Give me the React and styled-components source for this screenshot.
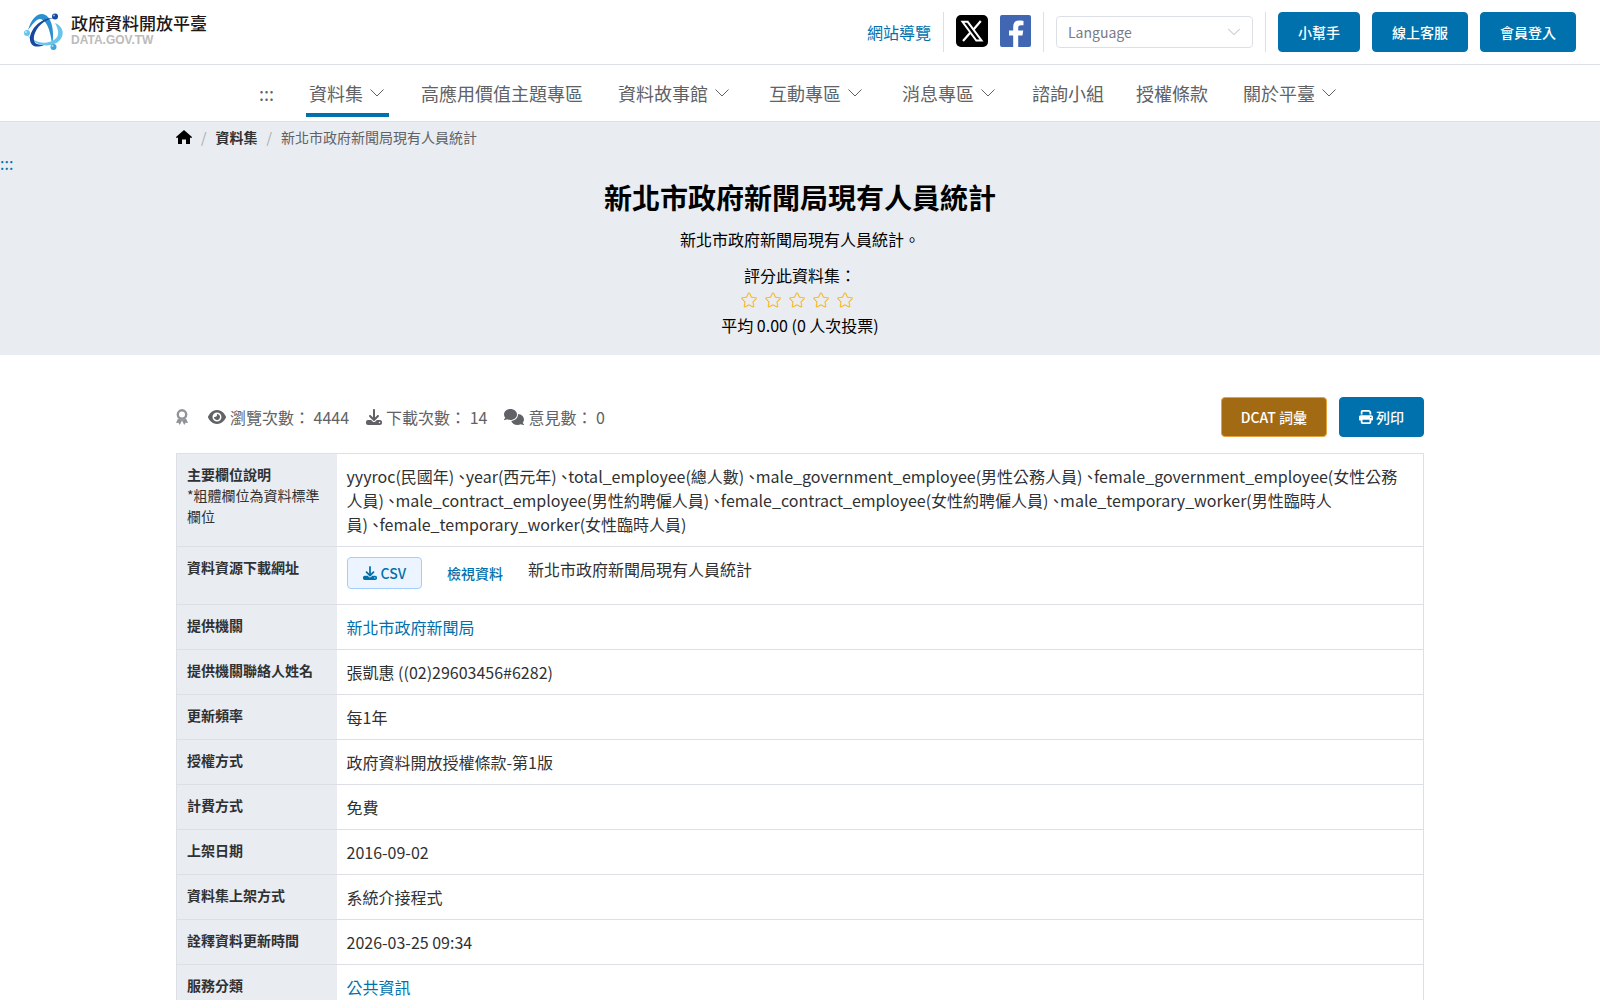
import React from "react";
import styled, { createGlobalStyle, css } from "styled-components";
import { FaDownload, FaEye, FaComments, FaPrint } from "react-icons/fa6";

const COLORS = {
  primary: "#0071ad",
  primaryLight: "#ecf5ff",
  primaryBorder: "#a0cfff",
  warning: "#a36a14",
  warningBorder: "#e6a23c",
  panel: "#e9ecf1",
  border: "#dcdfe6",
  text: "#303133",
  textMuted: "#606266",
  textLight: "#a8abb2",
  star: "#f7ba2a",
};

const NAV_ITEMS = [
  { label: "資料集", menu: true, active: true },
  { label: "高應用價值主題專區" },
  { label: "資料故事館", menu: true },
  { label: "互動專區", menu: true },
  { label: "消息專區", menu: true },
  { label: "諮詢小組" },
  { label: "授權條款" },
  { label: "關於平臺", menu: true },
];

const FIELDS = [
  "yyyroc(民國年)",
  "year(西元年)",
  "total_employee(總人數)",
  "male_government_employee(男性公務人員)",
  "female_government_employee(女性公務人員)",
  "male_contract_employee(男性約聘僱人員)",
  "female_contract_employee(女性約聘僱人員)",
  "male_temporary_worker(男性臨時人員)",
  "female_temporary_worker(女性臨時人員)",
];

// no line break on either side of the mark
const FIELD_SEPARATOR = "\u00a0、\u2060";

const DETAILS = [
  { name: "提供機關", value: "新北市政府新聞局", link: true },
  { name: "提供機關聯絡人姓名", value: "張凱惠 ((02)29603456#6282)" },
  { name: "更新頻率", value: "每1年" },
  { name: "授權方式", value: "政府資料開放授權條款-第1版" },
  { name: "計費方式", value: "免費" },
  { name: "上架日期", value: "2016-09-02" },
  { name: "資料集上架方式", value: "系統介接程式" },
  { name: "詮釋資料更新時間", value: "2026-03-25 09:34" },
  { name: "服務分類", value: "公共資訊", link: true },
];

function Chevron({ size = 16 }) {
  return (
    <svg width={size} height={size} viewBox="0 0 16 16" fill="none" aria-hidden="true">
      <path d="M1.5 4.5 8 11l6.5-6.5" stroke="currentColor" />
    </svg>
  );
}

function Emblem() {
  return (
    <svg width="40" height="38" viewBox="0 0 40 38" aria-hidden="true">
      <path d="M4 17C7 7 12 1 18 1c7 0 11 10 11 20 0 4 0 7-1 10-1-9-4-24-12-25C12 6 8 12 4 17z" fill="#2c8fd0" />
      <path d="M2 20c7 9 17 12 26 8 7-3 8-9 3-18 8 3 10 11 5 17-8 9-26 7-34-7z" fill="#67c5ec" />
      <path d="M30 5c-9 1-18 9-20 18-1 7 2 9 10 9-7 3-13 2-14-5C5 17 17 4 30 5z" fill="#17479e" />
      <circle cx="31" cy="3.500" r="3" fill="#17479e" />
      <circle cx="3" cy="20" r="3" fill="#67c5ec" />
      <circle cx="29.500" cy="34" r="3" fill="#3fa4dc" />
      <circle cx="30" cy="2.500" r="1" fill="#8fb4e4" />
      <circle cx="2" cy="19" r="1" fill="#c5eaf9" />
      <circle cx="28.500" cy="33" r="1" fill="#b5def4" />
    </svg>
  );
}

function XLogo() {
  return (
    <svg width="32" height="32" viewBox="0 0 32 32" aria-hidden="true">
      <rect width="32" height="32" rx="5" fill="#000" />
      <path d="M6.500 6.800h5.200L25.500 25.500h-5.200z" stroke="#fff" strokeWidth="2" fill="none" />
      <path d="M24.800 6 17.300 14.700M14.200 17.700 7 26" stroke="#fff" strokeWidth="2.200" />
    </svg>
  );
}

function FacebookLogo() {
  return (
    <svg width="31" height="32" viewBox="0 0 31 32" aria-hidden="true">
      <rect width="31" height="32" rx="2" fill="#4267b2" />
      <path
        d="M13.200 32V20.500H9v-5h4.200v-3.800C13.200 7.500 15.500 5.500 19 5.500c1.800 0 3.500.2 4.500.4v4.400h-2.600c-2.200 0-2.700 1-2.700 2.700v2.500h5l-.7 5h-4.300V32z"
        fill="#fff"
      />
    </svg>
  );
}

function HomeIcon() {
  return (
    <svg width="16" height="16" viewBox="0 0 16 16" aria-hidden="true">
      <path d="M8 1 0 8v.7h2V15h4v-4.500h4V15h4V8.700h2V8z" fill="#000" />
    </svg>
  );
}

function RibbonIcon() {
  return (
    <svg width="12" height="16" viewBox="0 0 12 16" fill="none" aria-hidden="true">
      <circle cx="6" cy="5.500" r="4.200" stroke="currentColor" strokeWidth="2.400" />
      <path d="M2 9.500 0 14l2.400-.3L3.800 16 6 11.500 8.200 16l1.400-2.300L12 14l-2-4.500L6 11z" fill="currentColor" />
    </svg>
  );
}

function StarIcon() {
  return (
    <svg width="18" height="18" viewBox="0 0 1024 1024" aria-hidden="true">
      <path
        d="m512 747.840 228.160 119.936a6.400 6.400 0 0 0 9.280-6.720l-43.520-254.080 184.512-179.904a6.400 6.400 0 0 0-3.520-10.880l-255.104-37.120L517.760 147.904a6.400 6.400 0 0 0-11.520 0L392.192 379.072l-255.104 37.120a6.400 6.400 0 0 0-3.520 10.880L318.080 606.976l-43.584 254.080a6.400 6.400 0 0 0 9.280 6.720zM313.600 924.480a70.400 70.400 0 0 1-102.144-74.240l37.888-220.928L88.960 472.960A70.400 70.400 0 0 1 128 352.896l221.760-32.256 99.200-200.960a70.400 70.400 0 0 1 126.208 0l99.200 200.960 221.824 32.256a70.400 70.400 0 0 1 39.040 120.064L774.720 629.376l37.888 220.928a70.400 70.400 0 0 1-102.144 74.240L512 820.096z"
        fill="currentColor"
      />
    </svg>
  );
}

function DetailRow({ name, note, children }) {
  return (
    <tr>
      <FieldName scope="row">
        {name}
        {note && <Note>{note}</Note>}
      </FieldName>
      <FieldValue>{children}</FieldValue>
    </tr>
  );
}

function App() {
  return (
    <>
      <GlobalStyle />
      <TopBar>
        <Brand href="#">
          <Emblem />
          <BrandText>
            <BrandName>政府資料開放平臺</BrandName>
            <BrandDomain>DATA.GOV.TW</BrandDomain>
          </BrandText>
        </Brand>
        <Tools>
          <TextLink href="#">網站導覽</TextLink>
          <Divider />
          <SocialLink href="#" aria-label="X">
            <XLogo />
          </SocialLink>
          <SocialLink href="#" aria-label="Facebook">
            <FacebookLogo />
          </SocialLink>
          <Divider />
          <SelectWrapper>
            <LanguageSelect aria-label="Language" defaultValue="">
              <option value="">Language</option>
            </LanguageSelect>
            <SelectArrow>
              <Chevron size={14} />
            </SelectArrow>
          </SelectWrapper>
          <Divider />
          <Button>小幫手</Button>
          <Button>線上客服</Button>
          <Button>會員登入</Button>
        </Tools>
      </TopBar>

      <Nav>
        <NavLink href="#">:::</NavLink>
        {NAV_ITEMS.map(({ label, menu, active }) => (
          <NavLink key={label} href="#" $menu={menu} $active={active}>
            {label}
            {menu && <Chevron />}
          </NavLink>
        ))}
      </Nav>

      <main>
        <Hero>
          <Container>
            <Breadcrumb>
              <a href="#" aria-label="首頁">
                <HomeIcon />
              </a>
              <Slash>/</Slash>
              <CrumbLink href="#">資料集</CrumbLink>
              <Slash>/</Slash>
              <span>新北市政府新聞局現有人員統計</span>
            </Breadcrumb>
          </Container>
          <Anchor href="#">:::</Anchor>
          <Title>新北市政府新聞局現有人員統計</Title>
          <Description>新北市政府新聞局現有人員統計。</Description>
          <div>評分此資料集：</div>
          <Stars>
            {[1, 2, 3, 4, 5].map((score) => (
              <StarButton key={score} aria-label={`${score}`}>
                <StarIcon />
              </StarButton>
            ))}
          </Stars>
          <div>平均 0.00 (0 人次投票)</div>
        </Hero>

        <Container>
          <Summary>
            <Stats>
              <RibbonWrapper>
                <RibbonIcon />
              </RibbonWrapper>
              <Stat>
                <FaEye size={18} />
                瀏覽次數： 4444
              </Stat>
              <Stat>
                <FaDownload size={16} />
                下載次數： 14
              </Stat>
              <Stat>
                <FaComments size={20} />
                意見數： 0
              </Stat>
            </Stats>
            <Actions>
              <Button $variant="warning">DCAT 詞彙</Button>
              <Button>
                <FaPrint size={14} />
                列印
              </Button>
            </Actions>
          </Summary>

          <Details>
            <tbody>
              <DetailRow name="主要欄位說明" note="*粗體欄位為資料標準欄位">
                <FieldList>{FIELDS.join(FIELD_SEPARATOR)}</FieldList>
              </DetailRow>
              <DetailRow name="資料資源下載網址">
                <Resource>
                  <CsvButton>
                    <FaDownload size={14} />
                    CSV
                  </CsvButton>
                  <SmallButton>檢視資料</SmallButton>
                  <span>新北市政府新聞局現有人員統計</span>
                </Resource>
              </DetailRow>
              {DETAILS.map(({ name, value, link }) => (
                <DetailRow key={name} name={name}>
                  {link ? <TextLink href="#">{value}</TextLink> : value}
                </DetailRow>
              ))}
            </tbody>
          </Details>
        </Container>
      </main>
    </>
  );
}

const GlobalStyle = createGlobalStyle`
  *, *::before, *::after {
    box-sizing: border-box;
  }

  html {
    overflow-x: hidden;
    scrollbar-width: none;
  }

  body {
    margin: 0;
    background: #fff;
    color: #000;
    font-family: "Noto Sans CJK TC", sans-serif;
    font-size: 16px;
    line-height: 24px;
  }

  a {
    color: inherit;
    text-decoration: none;
  }

  button, select {
    font: inherit;
    cursor: pointer;
  }

  svg {
    display: block;
    flex-shrink: 0;
  }
`;

const Container = styled.div`
  width: 78%;
  margin: 0 auto;
`;

const TopBar = styled.header`
  display: flex;
  justify-content: space-between;
  align-items: center;
  padding: 12px 24px;
  border-bottom: 1px solid ${COLORS.border};
`;

const Brand = styled.a`
  display: flex;
  align-items: center;
  gap: 7px;
`;

const BrandText = styled.span`
  display: flex;
  flex-direction: column;
  padding-bottom: 4px;
`;

const BrandName = styled.span`
  color: #231815;
  font-size: 17px;
  font-weight: 500;
  line-height: 20px;
`;

const BrandDomain = styled.span`
  color: #bbb;
  font-family: "Liberation Sans", sans-serif;
  font-size: 12px;
  font-weight: 700;
  line-height: 14px;
`;

const Tools = styled.div`
  display: flex;
  align-items: center;
  gap: 12px;
`;

const TextLink = styled.a`
  color: ${COLORS.primary};
`;

const SocialLink = styled.a`
  padding-bottom: 2px;
`;

const Divider = styled.span`
  width: 1px;
  height: 40px;
  background: ${COLORS.border};
`;

const SelectWrapper = styled.div`
  position: relative;
  width: 197px;
`;

const LanguageSelect = styled.select`
  appearance: none;
  display: block;
  width: 100%;
  height: 32px;
  padding: 0 11px;
  border: 1px solid ${COLORS.border};
  border-radius: 4px;
  background: #fff;
  color: #7a7a88;
  font-size: 14px;
`;

const SelectArrow = styled.span`
  position: absolute;
  top: 9px;
  right: 12px;
  color: ${COLORS.textLight};
  pointer-events: none;
`;

const Button = styled.button`
  display: flex;
  align-items: center;
  gap: 3px;
  height: 40px;
  padding: 0 19px;
  border: 1px solid ${COLORS.primary};
  border-radius: 4px;
  background: ${COLORS.primary};
  color: #fff;
  font-size: 14px;
  font-weight: 500;

  ${({ $variant }) =>
    $variant === "warning" &&
    css`
      border-color: ${COLORS.warningBorder};
      background: ${COLORS.warning};
    `}
`;

const Nav = styled.nav`
  display: flex;
  justify-content: center;
  gap: 32px;
  padding: 4px 0;
  border-bottom: 1px solid ${COLORS.border};
`;

const NavLink = styled.a`
  display: flex;
  align-items: center;
  gap: 6px;
  height: 48px;
  padding: ${({ $menu }) => ($menu ? "4px 4px 0 3px" : "4px 0 0")};
  border-bottom: 4px solid ${({ $active }) => ($active ? COLORS.primary : "transparent")};
  color: ${COLORS.textMuted};
  font-size: 18px;
`;

const Hero = styled.section`
  padding-bottom: 18px;
  background: ${COLORS.panel};
  text-align: center;
`;

const Breadcrumb = styled.nav`
  display: flex;
  align-items: center;
  padding: 5px 0 4px;
  color: ${COLORS.textMuted};
  font-size: 14px;
  line-height: 20px;
`;

const Slash = styled.span`
  margin: 0 9px;
  color: ${COLORS.textLight};
`;

const CrumbLink = styled.a`
  color: ${COLORS.text};
  font-weight: 700;
`;

const Anchor = styled.a`
  display: block;
  color: ${COLORS.primary};
  text-align: left;
`;

const Title = styled.h1`
  margin: 0;
  font-size: 28px;
  font-weight: 700;
  line-height: 44px;
`;

const Description = styled.p`
  margin: 8px 0 12px;
`;

const Stars = styled.div`
  display: flex;
  justify-content: center;
  align-items: center;
  height: 26px;
  color: ${COLORS.star};
`;

const StarButton = styled.button`
  padding: 0 6px 0 0;
  border: none;
  background: none;
  color: inherit;
`;

const Summary = styled.div`
  display: flex;
  justify-content: space-between;
  align-items: center;
  margin: 42px 0 16px;
`;

const Stats = styled.div`
  display: flex;
  gap: 17px;
  color: ${COLORS.textMuted};
`;

const Stat = styled.span`
  display: flex;
  align-items: center;
  gap: 4px;
`;

const RibbonWrapper = styled(Stat)`
  margin-right: 3px;
  color: #909399;
`;

const Actions = styled.div`
  display: flex;
  gap: 12px;
`;

const Details = styled.table`
  width: 100%;
  border: 1px solid ${COLORS.border};
  border-collapse: collapse;
  color: ${COLORS.text};
`;

const FieldName = styled.th`
  width: 160px;
  padding: 10px;
  border-bottom: 1px solid ${COLORS.border};
  background: ${COLORS.panel};
  font-size: 14px;
  font-weight: 700;
  line-height: 21px;
  text-align: left;
  vertical-align: top;
`;

const Note = styled.div`
  font-weight: 400;
`;

const FieldValue = styled.td`
  padding: 10px;
  border-bottom: 1px solid ${COLORS.border};
  vertical-align: top;
`;

const FieldList = styled.div`
  font-feature-settings: "halt";
`;

const Resource = styled.div`
  display: flex;
  gap: 9px;
  padding-bottom: 5px;
`;

const SmallButton = styled.button`
  display: flex;
  align-items: center;
  gap: 4px;
  height: 32px;
  padding: 0 15px;
  border: 1px solid transparent;
  border-radius: 4px;
  background: none;
  color: ${COLORS.primary};
  font-size: 14px;
  font-weight: 500;
`;

const CsvButton = styled(SmallButton)`
  border-color: ${COLORS.primaryBorder};
  background: ${COLORS.primaryLight};
`;

export default App;
